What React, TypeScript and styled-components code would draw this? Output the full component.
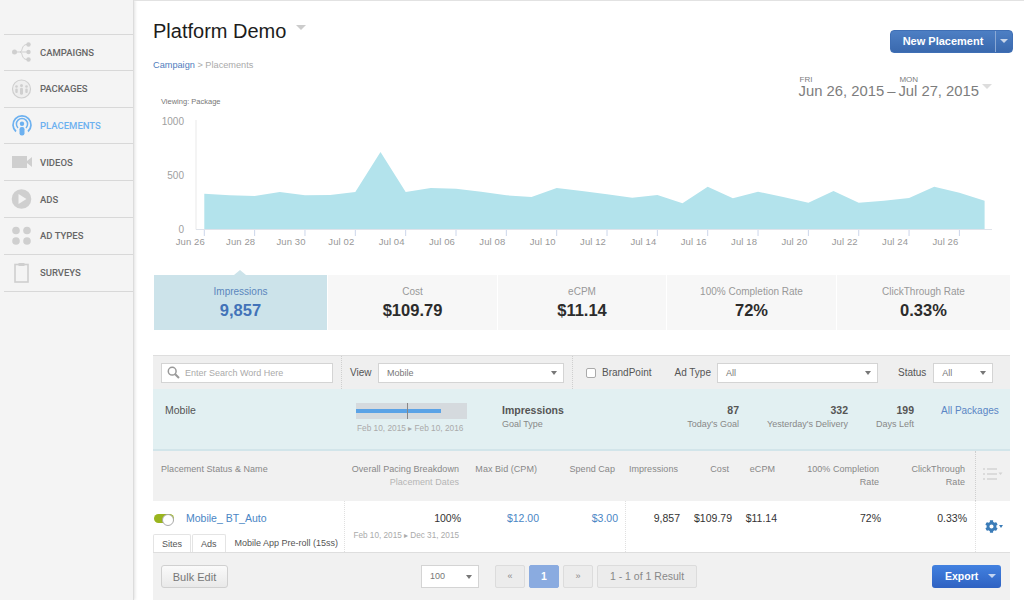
import React from "react";
import styled, { createGlobalStyle } from "styled-components";
import { FaCog } from "react-icons/fa";

const GlobalStyle = createGlobalStyle`
  html, body {
    margin: 0;
    padding: 0;
    background: #fff;
  }
  body {
    width: 1024px;
    height: 600px;
    overflow: hidden;
    font-family: "Liberation Sans", Arial, sans-serif;
    color: #333;
  }
  * {
    box-sizing: border-box;
  }
`;

const navItems = [
  { label: "CAMPAIGNS", icon: "tree" },
  { label: "PACKAGES", icon: "people" },
  { label: "PLACEMENTS", icon: "cast", active: true },
  { label: "VIDEOS", icon: "video" },
  { label: "ADS", icon: "play" },
  { label: "AD TYPES", icon: "dots" },
  { label: "SURVEYS", icon: "clip" },
];

function NavIcon({ name, color }: { name: string; color: string }) {
  if (name === "tree") {
    return (
      <svg width="22" height="22" viewBox="0 0 22 22">
        <g fill={color}>
          <circle cx="3.5" cy="11" r="2.5" />
          <circle cx="17.5" cy="3.5" r="2.2" />
          <circle cx="17.5" cy="11" r="2.2" />
          <circle cx="17.5" cy="18.5" r="2.2" />
        </g>
        <path d="M4 11H17M9 11C12 11 10 3.5 16 3.5M9 11C12 11 10 18.5 16 18.5" fill="none" stroke={color} strokeWidth="1" />
      </svg>
    );
  }
  if (name === "people") {
    return (
      <svg width="22" height="22" viewBox="0 0 22 22">
        <circle cx="10.5" cy="11" r="9" fill="#eee" stroke={color} strokeWidth="1.2" />
        <g fill={color}>
          <circle cx="5.5" cy="8.5" r="1.3" />
          <circle cx="10.5" cy="7.5" r="1.5" />
          <circle cx="15.5" cy="8.5" r="1.3" />
          <rect x="4.3" y="10.5" width="2.4" height="4.5" rx="1.1" />
          <rect x="9" y="9.8" width="3" height="7" rx="1.4" />
          <rect x="14.3" y="10.5" width="2.4" height="4.5" rx="1.1" />
        </g>
      </svg>
    );
  }
  if (name === "cast") {
    return (
      <svg width="22" height="22" viewBox="0 0 22 22">
        <path d="M5 17.5A9 9 0 1 1 17 17.5" fill="none" stroke={color} strokeWidth="1.7" />
        <path d="M7 14A5.6 5.6 0 1 1 15 14" fill="none" stroke={color} strokeWidth="1.5" />
        <circle cx="11" cy="9.8" r="2.2" fill={color} />
        <rect x="8.5" y="13" width="5" height="8.5" rx="2.2" fill={color} />
      </svg>
    );
  }
  if (name === "video") {
    return (
      <svg width="22" height="22" viewBox="0 0 22 22">
        <rect x="1" y="5" width="15" height="12" fill={color} />
        <path d="M16 10L21 6V16L16 12Z" fill={color} />
      </svg>
    );
  }
  if (name === "play") {
    return (
      <svg width="22" height="22" viewBox="0 0 22 22">
        <circle cx="10.5" cy="11" r="9.8" fill={color} />
        <path d="M7.5 6L15.5 11L7.5 16Z" fill="#f3f3f3" />
      </svg>
    );
  }
  if (name === "dots") {
    return (
      <svg width="22" height="22" viewBox="0 0 22 22">
        <g fill={color}>
          <circle cx="5" cy="5.5" r="3.8" />
          <circle cx="16" cy="5.5" r="3.8" />
          <circle cx="5" cy="16" r="3.8" />
          <circle cx="16" cy="16" r="3.8" />
        </g>
      </svg>
    );
  }
  return (
    <svg width="22" height="22" viewBox="0 0 22 22">
      <rect x="4" y="2.5" width="13" height="17.5" fill="none" stroke={color} strokeWidth="1.6" />
      <rect x="7.5" y="1" width="6" height="3" fill={color} />
    </svg>
  );
}

const series = [
  193.7, 195.3, 196, 192, 195.3, 195, 192, 152, 192, 188, 188.7, 191.7, 195.3, 197, 188, 191, 194.3,
  197.7, 195, 203.3, 186.7, 198.3, 191.7, 197, 202.7, 191, 202.7, 200.7, 198, 186.7, 192.7, 200.7,
];
const tickLabels = [
  "Jun 26", "Jun 28", "Jun 30", "Jul 02", "Jul 04", "Jul 06", "Jul 08", "Jul 10",
  "Jul 12", "Jul 14", "Jul 16", "Jul 18", "Jul 20", "Jul 22", "Jul 24", "Jul 26",
];
const dayX = (i: number) => 204.3 + i * 25.17;

function Chart() {
  const points = series.map((y, i) => `${dayX(i).toFixed(1)},${y}`).join(" ");
  const area = `204.3,229.5 ${points} ${dayX(31).toFixed(1)},229.5`;
  return (
    <ChartSvg viewBox="153 110 857 140" width="857" height="140">
      <line x1="196" y1="120" x2="196" y2="229.5" stroke="#e9e9e9" />
      <polygon points={area} fill="#b3e3ec" />
      <line x1="196" y1="229.5" x2="992" y2="229.5" stroke="#dfe3ea" />
      {tickLabels.map((label, i) => {
        const x = dayX(i * 2);
        return (
          <g key={label}>
            <line x1={x} y1="230" x2={x} y2="236" stroke="#ccd6eb" />
            <text x={x - 14} y="245" textAnchor="middle" fontSize="9.5" letterSpacing="0.1" fill="#999">
              {label}
            </text>
          </g>
        );
      })}
      <text x="184" y="125" textAnchor="end" fontSize="10" fill="#a0a0a0">1000</text>
      <text x="184" y="179" textAnchor="end" fontSize="10" fill="#a0a0a0">500</text>
      <text x="184" y="233" textAnchor="end" fontSize="10" fill="#a0a0a0">0</text>
    </ChartSvg>
  );
}

const kpis = [
  { label: "Impressions", value: "9,857", active: true, width: 173 },
  { label: "Cost", value: "$109.79", width: 169 },
  { label: "eCPM", value: "$11.14", width: 168 },
  { label: "100% Completion Rate", value: "72%", width: 169 },
  { label: "ClickThrough Rate", value: "0.33%", width: 173 },
];

const stats = [
  { value: "87", label: "Today's Goal", width: 100 },
  { value: "332", label: "Yesterday's Delivery", width: 109 },
  { value: "199", label: "Days Left", width: 66 },
];

const columns = "191px 117px 78px 86px 55px 52px 45px 104px 94px 35px";

function App() {
  return (
    <Page>
      <GlobalStyle />
      <Sidebar>
        {navItems.map((item) => (
          <NavRow key={item.label} $active={item.active}>
            <NavSlot>
              <NavIcon name={item.icon} color={item.active ? "#6db1f0" : "#cfcfcf"} />
            </NavSlot>
            {item.label}
          </NavRow>
        ))}
      </Sidebar>

      <Main>
        <TitleRow>
          <Title>
            Platform Demo
            <TitleCaret />
          </Title>
          <SplitButton>
            <SplitLabel>New Placement</SplitLabel>
            <SplitCaret />
          </SplitButton>
        </TitleRow>

        <Breadcrumb>
          <a>Campaign</a> &gt; Placements
        </Breadcrumb>

        <ViewingRow>
          <Viewing>Viewing: Package</Viewing>
          <DateRange>
            <DateBlock>
              <small>FRI</small>
              <span>Jun 26, 2015</span>
            </DateBlock>
            <DateDash>–</DateDash>
            <DateBlock>
              <small>MON</small>
              <span>Jul 27, 2015</span>
            </DateBlock>
            <DateCaret />
          </DateRange>
        </ViewingRow>

        <Chart />

        <KpiRow>
          {kpis.map((kpi) => (
            <KpiTile key={kpi.label} $active={kpi.active} $width={kpi.width}>
              <KpiLabel $active={kpi.active}>{kpi.label}</KpiLabel>
              <KpiValue $active={kpi.active}>{kpi.value}</KpiValue>
            </KpiTile>
          ))}
        </KpiRow>

        <Panel>
          <FilterBar>
            <SearchBox>
              <svg width="13" height="13" viewBox="0 0 13 13">
                <circle cx="5.2" cy="5.2" r="3.9" fill="none" stroke="#999" strokeWidth="1.5" />
                <path d="M8.2 8.2L12 12" stroke="#999" strokeWidth="2" />
              </svg>
              <SearchInput placeholder="Enter Search Word Here" />
            </SearchBox>
            <FilterGroup>
              <FilterLabel>View</FilterLabel>
              <Select $width={186}>
                Mobile
                <SelectCaret />
              </Select>
            </FilterGroup>
            <CheckGroup>
              <CheckBox type="checkbox" />
              <FilterLabel>BrandPoint</FilterLabel>
            </CheckGroup>
            <AdTypeLabel>Ad Type</AdTypeLabel>
            <Select $width={161}>
              All
              <SelectCaret />
            </Select>
            <StatusLabel>Status</StatusLabel>
            <Select $width={60}>
              All
              <SelectCaret />
            </Select>
          </FilterBar>

          <InfoBand>
            <InfoName>Mobile</InfoName>
            <PacingBlock>
              <PacingTrack>
                <PacingFill style={{ width: "77%" }} />
                <PacingMark />
              </PacingTrack>
              <PacingDates>Feb 10, 2015 ▸ Feb 10, 2016</PacingDates>
            </PacingBlock>
            <GoalBlock>
              <strong>Impressions</strong>
              <span>Goal Type</span>
            </GoalBlock>
            {stats.map((stat) => (
              <StatBlock key={stat.label} $width={stat.width}>
                <strong>{stat.value}</strong>
                <span>{stat.label}</span>
              </StatBlock>
            ))}
            <AllPackages>All Packages</AllPackages>
          </InfoBand>

          <HeaderRow>
            <HeadCell $left $pad={0}>Placement Status &amp; Name</HeadCell>
            <HeadCell $pad={2}>
              Overall Pacing Breakdown
              <HeadSub>Placement Dates</HeadSub>
            </HeadCell>
            <HeadCell $pad={2}>Max Bid (CPM)</HeadCell>
            <HeadCell $pad={10}>Spend Cap</HeadCell>
            <HeadCell $pad={2}>Impressions</HeadCell>
            <HeadCell $pad={3}>Cost</HeadCell>
            <HeadCell $pad={2}>eCPM</HeadCell>
            <HeadCell $pad={2} $wrap={20}>100% Completion Rate</HeadCell>
            <HeadCell $pad={10} $wrap={20}>ClickThrough Rate</HeadCell>
            <ColumnMenu>
              <svg width="20" height="14" viewBox="0 0 20 14">
                <path d="M0 2H2M4 2H14M0 7H2M4 7H14M0 12H2M4 12H14" stroke="#d4d4d4" strokeWidth="1.6" />
                <path d="M15.5 5.5H19.5L17.5 8Z" fill="#d4d4d4" />
              </svg>
            </ColumnMenu>
          </HeaderRow>

          <DataRow>
            <NameCell>
              <NameLine>
                <Toggle />
                <NameLink>Mobile_ BT_Auto</NameLink>
              </NameLine>
              <Tabs>
                <Tab>Sites</Tab>
                <Tab>Ads</Tab>
                <TabPlain>Mobile App Pre-roll (15ss)</TabPlain>
              </Tabs>
            </NameCell>
            <Cell $divider>
              100%
              <CellSub>Feb 10, 2015 ▸ Dec 31, 2015</CellSub>
            </Cell>
            <Cell $link>$12.00</Cell>
            <Cell $link $pad={7}>$3.00</Cell>
            <Cell $divider>9,857</Cell>
            <Cell>$109.79</Cell>
            <Cell>$11.14</Cell>
            <Cell>72%</Cell>
            <Cell $pad={8}>0.33%</Cell>
            <ActionCell>
              <FaCog size={13} color="#3b7cb8" />
              <GearCaret />
            </ActionCell>
          </DataRow>

          <Footer>
            <BulkButton>Bulk Edit</BulkButton>
            <PagerGroup>
              <Select $width={58} $tall>
                100
                <SelectCaret />
              </Select>
              <Pager>
                <PageBtn>«</PageBtn>
                <PageBtn $current>1</PageBtn>
                <PageBtn>»</PageBtn>
                <ResultBox>1 - 1 of 1 Result</ResultBox>
              </Pager>
            </PagerGroup>
            <ExportButton>
              Export
              <ExportCaret />
            </ExportButton>
          </Footer>
        </Panel>
      </Main>
    </Page>
  );
}

const Page = styled.div`
  display: flex;
  width: 1024px;
  height: 600px;
  overflow: hidden;
`;

const Sidebar = styled.nav`
  width: 134px;
  flex: none;
  height: 600px;
  padding: 34px 0 0 4px;
  background: #f4f4f4;
  border-right: 1px solid #dcdcdc;
  box-shadow: 1px 0 3px rgba(0, 0, 0, 0.12);
`;

const NavRow = styled.div<{ $active?: boolean }>`
  display: flex;
  align-items: center;
  gap: 7px;
  height: 36.8px;
  padding-left: 7px;
  font-family: Roboto, "Liberation Sans", sans-serif;
  font-size: 9.5px;
  font-weight: 500;
  color: ${(p) => (p.$active ? "#6db1f0" : "#666")};
  border-bottom: 1px solid #d8d8d8;

  &:first-child {
    border-top: 1px solid #d8d8d8;
  }
`;

const NavSlot = styled.span`
  display: flex;
  width: 22px;
  height: 22px;
`;

const Main = styled.main`
  flex: 1;
  min-width: 0;
  height: 600px;
  padding: 0 14px 0 19px;
  border-top: 1px solid #e2e2e2;
`;

const TitleRow = styled.header`
  display: flex;
  justify-content: space-between;
  align-items: flex-start;
  height: 58px;
  margin-right: -3px;
`;

const Title = styled.h1`
  display: flex;
  margin: 18px 0 0;
  font-size: 20px;
  line-height: 24px;
  font-weight: 400;
  color: #1c1c1c;
`;

const TitleCaret = styled.i`
  width: 0;
  height: 0;
  margin: 6px 0 0 10px;
  border-left: 5px solid transparent;
  border-right: 5px solid transparent;
  border-top: 5px solid #ccc;
`;

const SplitButton = styled.div`
  display: flex;
  width: 123px;
  height: 23px;
  margin-top: 29px;
  border-radius: 4px;
  background: linear-gradient(#4d7fc4, #3a69ae);
  border: 1px solid #3f6fb5;
`;

const SplitLabel = styled.span`
  flex: 1;
  text-align: center;
  font-size: 11px;
  font-weight: 700;
  line-height: 21px;
  color: #fff;
`;

const SplitCaret = styled.span`
  position: relative;
  width: 17px;
  border-left: 1px solid #8aa8d4;

  &::after {
    content: "";
    position: absolute;
    left: 4px;
    top: 8px;
    border-left: 4px solid transparent;
    border-right: 4px solid transparent;
    border-top: 4px solid #c9d6ea;
  }
`;

const Breadcrumb = styled.div`
  font-size: 9.2px;
  line-height: 12px;
  color: #aaa;

  a {
    color: #4f7cbd;
  }
`;

const ViewingRow = styled.div`
  display: flex;
  justify-content: space-between;
  align-items: flex-start;
  height: 39px;
  padding: 0 0 0 8px;
`;

const Viewing = styled.div`
  margin-top: 26px;
  font-size: 7.5px;
  line-height: 10px;
  color: #777;
`;

const DateRange = styled.div`
  display: flex;
  align-items: flex-start;
  margin: 4px 18px 0 0;
  color: #7d7d7d;
`;

const DateBlock = styled.div`
  display: flex;
  flex-direction: column;
  font-size: 14.8px;
  line-height: 15px;

  small {
    font-size: 8px;
    line-height: 9px;
    padding-left: 1px;
  }
`;

const DateDash = styled.span`
  margin: 9px 3px 0;
  font-size: 14.8px;
  line-height: 15px;
`;

const DateCaret = styled.i`
  width: 0;
  height: 0;
  margin: 9px 0 0 3px;
  border-left: 5px solid transparent;
  border-right: 5px solid transparent;
  border-top: 5px solid #ddd;
`;

const ChartSvg = styled.svg`
  display: block;
  font-family: "Liberation Sans", Arial, sans-serif;
`;

const KpiRow = styled.section`
  display: flex;
  gap: 1px;
  height: 55px;
  margin: 25px 0 0 1px;
`;

const KpiTile = styled.div<{ $active?: boolean; $width: number }>`
  position: relative;
  display: flex;
  flex-direction: column;
  align-items: center;
  width: ${(p) => p.$width}px;
  padding-top: 11px;
  background: ${(p) => (p.$active ? "#cce3ea" : "#f7f7f7")};

  ${(p) =>
    p.$active &&
    `&::before {
      content: "";
      position: absolute;
      top: -5px;
      left: 80px;
      border-left: 6px solid transparent;
      border-right: 6px solid transparent;
      border-bottom: 5px solid #cce3ea;
    }`}
`;

const KpiLabel = styled.div<{ $active?: boolean }>`
  font-size: 10px;
  line-height: 12px;
  color: ${(p) => (p.$active ? "#5b86bd" : "#999")};
`;

const KpiValue = styled.div<{ $active?: boolean }>`
  margin-top: 2px;
  font-size: 16.5px;
  line-height: 20px;
  font-weight: 700;
  color: ${(p) => (p.$active ? "#4272b8" : "#2c2c2c")};
`;

const Panel = styled.section`
  margin-top: 25px;
  border-top: 1px solid #dedede;
`;

const FilterBar = styled.div`
  display: flex;
  align-items: center;
  height: 33px;
  padding-left: 8px;
  background: #efefef;
`;

const SearchBox = styled.label`
  display: flex;
  align-items: center;
  gap: 5px;
  width: 172px;
  height: 20px;
  padding-left: 5px;
  background: #fff;
  border: 1px solid #d4d4d4;
`;

const SearchInput = styled.input`
  flex: 1;
  min-width: 0;
  border: 0;
  padding: 0;
  outline: 0;
  font: 9px "Liberation Sans", Arial, sans-serif;

  &::placeholder {
    color: #aaa;
    opacity: 1;
  }
`;

const FilterGroup = styled.div`
  display: flex;
  align-items: center;
  justify-content: space-between;
  width: 232px;
  height: 33px;
  margin-left: 8px;
  padding: 0 8px;
  border-left: 1px dotted #cfcfcf;
  border-right: 1px dotted #cfcfcf;
`;

const FilterLabel = styled.span`
  font-size: 10px;
  color: #555;
  white-space: nowrap;
`;

const AdTypeLabel = styled(FilterLabel)`
  margin-right: 6px;
`;

const StatusLabel = styled(FilterLabel)`
  margin-left: 20px;
  margin-right: 7px;
`;

const CheckGroup = styled.label`
  display: flex;
  align-items: center;
  gap: 6px;
  margin-left: 13px;
  margin-right: 23px;
`;

const CheckBox = styled.input`
  appearance: none;
  width: 10px;
  height: 10px;
  margin: 0;
  background: #fff;
  border: 1px solid #aaa;
  border-radius: 2px;
`;

const Select = styled.div<{ $width: number; $tall?: boolean }>`
  position: relative;
  flex: none;
  width: ${(p) => p.$width}px;
  height: ${(p) => (p.$tall ? 23 : 20)}px;
  padding-left: 8px;
  font-size: 9px;
  line-height: ${(p) => (p.$tall ? 21 : 18)}px;
  color: #777;
  background: #fff;
  border: 1px solid #d4d4d4;
`;

const SelectCaret = styled.i`
  position: absolute;
  right: 6px;
  top: 50%;
  margin-top: -2px;
  border-left: 3px solid transparent;
  border-right: 3px solid transparent;
  border-top: 4px solid #777;
`;

const InfoBand = styled.div`
  display: flex;
  align-items: flex-start;
  height: 62px;
  padding-top: 14px;
  background: #e2f0f2;
  border-bottom: 2px solid #d2e5ea;
`;

const InfoName = styled.div`
  width: 203px;
  padding: 1px 0 0 12px;
  font-size: 10.5px;
  line-height: 13px;
  color: #555;
`;

const PacingBlock = styled.div`
  width: 146px;
`;

const PacingTrack = styled.div`
  position: relative;
  width: 111px;
  height: 16px;
  background: #d5dade;
`;

const PacingFill = styled.div`
  position: absolute;
  left: 0;
  top: 6px;
  height: 4px;
  background: #5ba3e6;
`;

const PacingMark = styled.div`
  position: absolute;
  left: 51px;
  top: 0;
  width: 1px;
  height: 16px;
  background: #888;
`;

const PacingDates = styled.div`
  margin: 4px 0 0 1px;
  font-size: 8.3px;
  line-height: 11px;
  color: #aaa;
  white-space: nowrap;
`;

const GoalBlock = styled.div`
  display: flex;
  flex-direction: column;
  width: 137px;
  padding-top: 1px;

  strong {
    font-size: 10.5px;
    line-height: 13px;
    color: #555;
  }

  span {
    margin-top: 2px;
    font-size: 9px;
    line-height: 11px;
    color: #888;
  }
`;

const StatBlock = styled(GoalBlock)<{ $width: number }>`
  width: ${(p) => p.$width}px;
  align-items: flex-end;
  white-space: nowrap;
`;

const AllPackages = styled.a`
  margin: 1px 0 0 27px;
  font-size: 10px;
  line-height: 13px;
  color: #5b86c5;
  white-space: nowrap;
`;

const HeaderRow = styled.div`
  display: grid;
  grid-template-columns: ${columns};
  height: 50px;
  background: #f1f1f1;
`;

const HeadCell = styled.div<{ $left?: boolean; $pad: number; $wrap?: number }>`
  padding: 12px ${(p) => p.$pad}px 0 ${(p) => (p.$left ? 8 : p.$wrap ?? 0)}px;
  font-size: 9px;
  line-height: 12.5px;
  letter-spacing: 0.05px;
  color: #888;
  text-align: ${(p) => (p.$left ? "left" : "right")};
`;

const HeadSub = styled.div`
  color: #b5b5b5;
`;

const ColumnMenu = styled.div`
  padding: 16px 0 0 7px;
  border-left: 1px dotted #cfcfcf;
`;

const DataRow = styled.div`
  display: grid;
  grid-template-columns: ${columns};
  height: 52px;
  background: #fff;
  border-bottom: 1px solid #dedede;
`;

const NameCell = styled.div`
  display: flex;
  flex-direction: column;
  justify-content: space-between;
  padding-top: 11px;
`;

const NameLine = styled.div`
  display: flex;
  align-items: center;
  gap: 12px;
  padding-left: 1px;
`;

const Toggle = styled.span`
  position: relative;
  width: 20px;
  height: 9px;
  border-radius: 5px;
  background: #9ab51e;

  &::after {
    content: "";
    position: absolute;
    right: 0;
    top: -0.5px;
    width: 10px;
    height: 10px;
    border-radius: 50%;
    background: #fff;
    border: 1px solid #aaa;
  }
`;

const NameLink = styled.a`
  font-size: 10.5px;
  line-height: 13px;
  color: #4a86c5;
`;

const Tabs = styled.div`
  display: flex;
  align-items: flex-end;
  gap: 1px;
`;

const Tab = styled.span`
  height: 18px;
  padding: 0 8px;
  font-size: 9px;
  line-height: 18px;
  color: #555;
  border: 1px solid #e4e4e4;
  border-bottom: 0;
  border-radius: 2px 2px 0 0;
`;

const TabPlain = styled.span`
  height: 18px;
  padding-left: 8px;
  font-size: 9px;
  line-height: 18px;
  color: #555;
  white-space: nowrap;
`;

const Cell = styled.div<{ $divider?: boolean; $link?: boolean; $pad?: number }>`
  padding: 11px ${(p) => p.$pad ?? 0}px 0 0;
  font-size: 10.5px;
  line-height: 13px;
  text-align: right;
  color: ${(p) => (p.$link ? "#4a86c5" : "#333")};
  border-left: ${(p) => (p.$divider ? "1px dotted #e0e0e0" : "0")};
`;

const CellSub = styled.div`
  margin-top: 5px;
  padding-right: 2px;
  font-size: 8.2px;
  line-height: 11px;
  color: #aaa;
  white-space: nowrap;
`;

const ActionCell = styled.div`
  display: flex;
  align-items: center;
  padding: 0 0 0 9px;
  border-left: 1px dotted #e0e0e0;
`;

const GearCaret = styled.i`
  margin-left: 1px;
  border-left: 2.5px solid transparent;
  border-right: 2.5px solid transparent;
  border-top: 3px solid #3b7cb8;
`;

const Footer = styled.div`
  display: flex;
  align-items: flex-start;
  height: 47px;
  padding: 12px 9px 0 8px;
  background: #f1f1f1;
`;

const BulkButton = styled.button`
  width: 67px;
  height: 23px;
  padding: 0;
  font: 11px "Liberation Sans", Arial, sans-serif;
  color: #777;
  background: linear-gradient(#fafafa, #e9e9e9);
  border: 1px solid #d0d0d0;
  border-radius: 3px;
`;

const PagerGroup = styled.div`
  display: flex;
  margin-left: 193px;
  gap: 16px;
`;

const Pager = styled.div`
  display: flex;
  gap: 4px;
`;

const PageBtn = styled.span<{ $current?: boolean }>`
  width: 30px;
  height: 23px;
  font-size: ${(p) => (p.$current ? 10.5 : 9)}px;
  font-weight: ${(p) => (p.$current ? 700 : 400)};
  line-height: 21px;
  text-align: center;
  color: ${(p) => (p.$current ? "#fff" : "#888")};
  background: ${(p) => (p.$current ? "#8aabe0" : "#ececec")};
  border: 1px solid ${(p) => (p.$current ? "#8aabe0" : "#dcdcdc")};
  border-radius: 2px;
`;

const ResultBox = styled.span`
  width: 100px;
  height: 23px;
  font-size: 10.5px;
  line-height: 21px;
  text-align: center;
  color: #888;
  background: #ececec;
  border: 1px solid #dcdcdc;
  border-radius: 2px;
`;

const ExportButton = styled.div`
  position: relative;
  width: 69px;
  height: 23px;
  margin-left: auto;
  padding-left: 13px;
  font-size: 10.5px;
  font-weight: 700;
  line-height: 23px;
  color: #fff;
  background: linear-gradient(#4281e0, #2f62c2);
  border-radius: 3px;
`;

const ExportCaret = styled.i`
  position: absolute;
  right: 5px;
  top: 9px;
  border-left: 4px solid transparent;
  border-right: 4px solid transparent;
  border-top: 4px solid #c4d5f2;
`;

export default App;
